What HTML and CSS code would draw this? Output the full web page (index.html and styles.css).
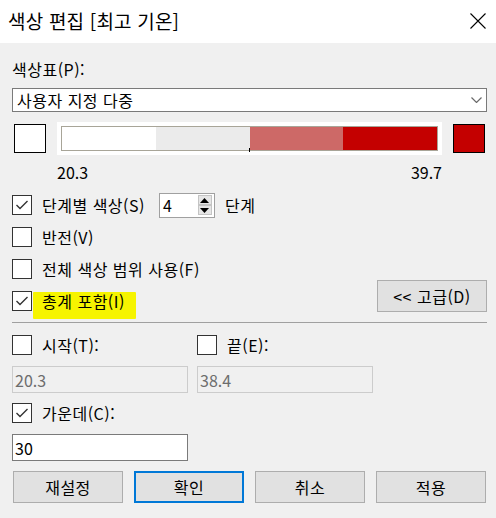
FILE: index.html
```html
<!DOCTYPE html>
<html lang="ko">
<head>
<meta charset="utf-8">
<title>색상 편집</title>
<link rel="stylesheet" href="styles.css">
</head>
<body>
<div class="dialog">
  <div class="titlebar">
    <span class="title">색상 편집 [최고 기온]</span>
    <svg class="close" width="16" height="16" viewBox="0 0 16 16"><path d="M0.5 0.5 L15.5 15.5 M15.5 0.5 L0.5 15.5" stroke="#000" stroke-width="1.1" fill="none"/></svg>
  </div>
  <div class="content">
    <div class="label">색상표(P):</div>
    <div class="select">
      <span>사용자 지정 다중</span>
      <svg class="chev" width="11" height="6" viewBox="0 0 11 6"><path d="M0.5 0.5 L5.5 5.5 L10.5 0.5" stroke="#6a6a6a" stroke-width="1.2" fill="none"/></svg>
    </div>
    <div class="ramp-row">
      <div class="swatch swatch-white"></div>
      <div class="ramp">
        <div class="ramp-bar">
          <span class="seg seg1"></span>
          <span class="seg seg2"></span>
          <span class="seg seg3"></span>
          <span class="seg seg4"></span>
          <i class="tick"></i>
        </div>
      </div>
      <div class="swatch swatch-red"></div>
    </div>
    <div class="ramp-labels"><span>20.3</span><span>39.7</span></div>

    <div class="options">
      <div class="row">
        <span class="cb"><svg width="18" height="18" viewBox="0 0 18 18"><path d="M3.5 9 L7 12.5 L14.5 5" stroke="#333" stroke-width="1.4" fill="none"/></svg></span>
        <span class="txt">단계별 색상(S)</span>
        <div class="spin">
          <span class="spin-val">4</span>
          <div class="spin-btns">
            <span class="spin-btn"><svg width="9" height="5" viewBox="0 0 9 5"><path d="M0 5 L4.5 0 L9 5 Z" fill="#000"/></svg></span>
            <span class="spin-btn"><svg width="9" height="5" viewBox="0 0 9 5"><path d="M0 0 L4.5 5 L9 0 Z" fill="#000"/></svg></span>
          </div>
        </div>
        <span class="txt unit">단계</span>
      </div>
      <div class="row">
        <span class="cb"></span>
        <span class="txt">반전(V)</span>
      </div>
      <div class="row">
        <span class="cb"></span>
        <span class="txt">전체 색상 범위 사용(F)</span>
      </div>
      <div class="row row-last">
        <div class="check-group">
          <span class="cb"><svg width="18" height="18" viewBox="0 0 18 18"><path d="M3.5 9 L7 12.5 L14.5 5" stroke="#333" stroke-width="1.4" fill="none"/></svg></span>
          <span class="txt marked">총계 포함(I)</span>
        </div>
        <button class="btn btn-adv">&lt;&lt; 고급(D)</button>
      </div>
    </div>

    <div class="sep"></div>

    <div class="range">
      <div class="row row-short">
        <span class="cb"></span>
        <span class="txt">시작(T):</span>
      </div>
      <div class="row row-short">
        <span class="cb"></span>
        <span class="txt">끝(E):</span>
      </div>
      <div class="field field-disabled">20.3</div>
      <div class="field field-disabled">38.4</div>
    </div>

    <div class="row row-short row-center">
      <span class="cb"><svg width="18" height="18" viewBox="0 0 18 18"><path d="M3.5 9 L7 12.5 L14.5 5" stroke="#333" stroke-width="1.4" fill="none"/></svg></span>
      <span class="txt">가운데(C):</span>
    </div>
    <div class="field field-center">30</div>

    <div class="buttons">
      <button class="btn">재설정</button>
      <button class="btn btn-default">확인</button>
      <button class="btn">취소</button>
      <button class="btn">적용</button>
    </div>
  </div>
</div>
</body>
</html>
```

FILE: styles.css
```css
* { box-sizing: border-box; }

html, body {
  margin: 0;
  padding: 0;
  background: #f0f0f0;
}

body {
  font-family: "Noto Sans CJK KR", "Noto Sans", sans-serif;
  font-size: 16px;
  letter-spacing: 0.5px;
  line-height: 20px;
  color: #000;
  width: 496px;
  height: 518px;
  overflow: hidden;
}

.titlebar {
  height: 43px;
  background: #fff;
  display: flex;
  align-items: center;
  justify-content: space-between;
  padding: 0 10px 0 8px;
}

.title {
  font-size: 19px;
  letter-spacing: 0.2px;
  line-height: 24px;
  margin-top: -1px;
}

.close { display: block; margin-top: -1px; }

.content {
  padding: 16px 9px 0 12px;
}

.label { height: 20px; }

.select {
  margin-top: 9px;
  height: 24px;
  background: #fff;
  border: 1px solid #7a7a7a;
  display: flex;
  align-items: center;
  justify-content: space-between;
  padding: 0 4px 0 4px;
}

.chev { display: block; }

.ramp-row {
  margin-top: 10px;
  height: 33px;
  display: flex;
  align-items: center;
  gap: 11px;
  padding-left: 2px;
}

.swatch {
  width: 32px;
  height: 29px;
  border: 1px solid #000;
}

.swatch-white { background: #fff; }
.swatch-red { background: #c40000; }

.ramp {
  width: 385px;
  height: 33px;
  background: #fff;
  padding: 4px;
}

.ramp-bar {
  position: relative;
  height: 25px;
  border: 1px solid #a8a598;
  display: flex;
}

.seg { flex: 1; height: 100%; }
.seg1 { background: #ffffff; }
.seg2 { background: #ebebeb; }
.seg3 { background: #cd6967; }
.seg4 { background: #c40000; }

.tick {
  position: absolute;
  left: 187px;
  bottom: -2px;
  width: 1px;
  height: 4px;
  background: #000;
}

.ramp-labels {
  margin-top: 7px;
  height: 20px;
  display: flex;
  justify-content: space-between;
  padding: 0 45px;
  letter-spacing: 0;
}

.options { margin-top: 7px; }

.row {
  height: 32px;
  display: flex;
  align-items: center;
}

.row-short { height: 24px; }

.cb {
  width: 20px;
  height: 20px;
  border: 1px solid #333;
  background: #fff;
  display: flex;
  align-items: center;
  justify-content: center;
  flex: none;
}

.cb svg { display: block; }

.txt { margin-left: 10px; white-space: nowrap; }

.spin {
  margin-left: 14px;
  width: 56px;
  height: 25px;
  border: 1px solid #a0a0a0;
  background: #fff;
  display: flex;
  align-items: center;
  justify-content: space-between;
  padding: 0 2px 0 3px;
  flex: none;
}

.spin-btns {
  display: flex;
  flex-direction: column;
  width: 14px;
  height: 20px;
}

.spin-btn {
  flex: 1;
  background: #e6e6e6;
  border: 1px solid #c4c4c4;
  display: flex;
  align-items: center;
  justify-content: center;
}

.spin-btn svg { display: block; }

.unit { margin-left: 10px; }

.row-last { justify-content: space-between; }

.check-group { display: flex; align-items: center; }

.marked {
  position: relative;
  isolation: isolate;
}

.marked::before {
  content: "";
  position: absolute;
  left: -9px;
  top: 1px;
  width: 103px;
  height: 27px;
  background: #f6f400;
  z-index: -1;
  border-radius: 1px;
}

.btn {
  font-family: inherit;
  font-size: 16px;
  letter-spacing: 0.5px;
  line-height: 20px;
  color: #000;
  width: 110px;
  height: 32px;
  background: #e1e1e1;
  border: 1px solid #adadad;
  padding: 0;
  margin: 0;
}

.btn-adv {
  align-self: flex-start;
  margin-top: -5px;
}

.btn-default { border: 2px solid #0078d7; }

.sep {
  margin-top: 5px;
  height: 1px;
  background: #a0a0a0;
}

.range {
  margin-top: 10px;
  display: grid;
  grid-template-columns: 176px 176px;
  column-gap: 9px;
  row-gap: 9px;
}

.field {
  height: 27px;
  border: 1px solid #7a7a7a;
  background: #fff;
  padding: 0 2px;
  display: flex;
  align-items: center;
  letter-spacing: 0;
}

.field-disabled {
  border-color: #cccccc;
  background: #f0f0f0;
  color: #6d6d6d;
}

.row-center { margin-top: 8px; }

.field-center {
  margin-top: 9px;
  width: 176px;
}

.buttons {
  margin-top: 10px;
  display: flex;
  gap: 11px;
  padding-left: 1px;
}
```
